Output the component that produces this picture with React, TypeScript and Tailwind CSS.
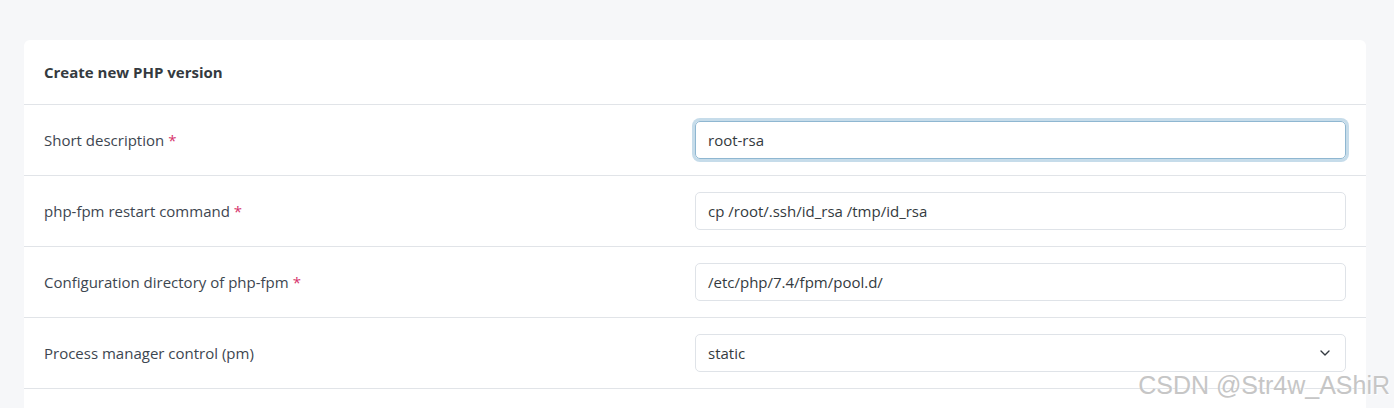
import { ChevronDown } from 'lucide-react';

const rows = [
  { label: 'Short description', required: true, value: 'root-rsa', focused: true },
  { label: 'php-fpm restart command', required: true, value: 'cp /root/.ssh/id_rsa /tmp/id_rsa' },
  { label: 'Configuration directory of php-fpm', required: true, value: '/etc/php/7.4/fpm/pool.d/' },
  { label: 'Process manager control (pm)', required: false, value: 'static', select: true },
];

export default function App() {
  return (
    <div
      className="relative h-[408px] overflow-hidden bg-[#f6f7f9] pl-6 pr-7 pt-10"
      style={{ fontFamily: '"Open Sans", "Noto Sans", sans-serif' }}
    >
      <div className="rounded-t-md bg-white">
        <div className="flex h-[65px] items-center border-b border-[#e1e4e8] px-5">
          <h3 className="text-[15px] font-bold text-[#343a40]">Create new PHP version</h3>
        </div>
        {rows.map((row) => (
          <div key={row.label} className="grid grid-cols-2 items-center border-b border-[#e1e4e8] py-4 pl-5 pr-5">
            <label className="text-[15px] text-[#3d4650]">
              {row.label}
              {row.required && <span className="ml-1 text-[#d6336c]">*</span>}
            </label>
            <div
              className={
                row.focused
                  ? 'flex h-[38px] items-center rounded-[5px] border border-[#8fb7d1] px-3 text-[15px] text-[#343a40] shadow-[0_0_0_3px_#c6dcea]'
                  : 'flex h-[38px] items-center justify-between rounded-[5px] border border-[#dfe3e8] px-3 text-[15px] text-[#343a40]'
              }
            >
              <span>{row.value}</span>
              {row.select && <ChevronDown className="h-4 w-4 text-[#343a40]" strokeWidth={2} />}
            </div>
          </div>
        ))}
        <div className="h-20" />
      </div>
      <div
        className="absolute bottom-[10px] right-[4px] text-[25px] leading-none text-[#c6c6c6] [text-shadow:1px_1px_1px_#ffffff]"
        style={{ fontFamily: '"Liberation Sans", Arial, sans-serif' }}
      >
        CSDN @Str4w_AShiR
      </div>
    </div>
  );
}
